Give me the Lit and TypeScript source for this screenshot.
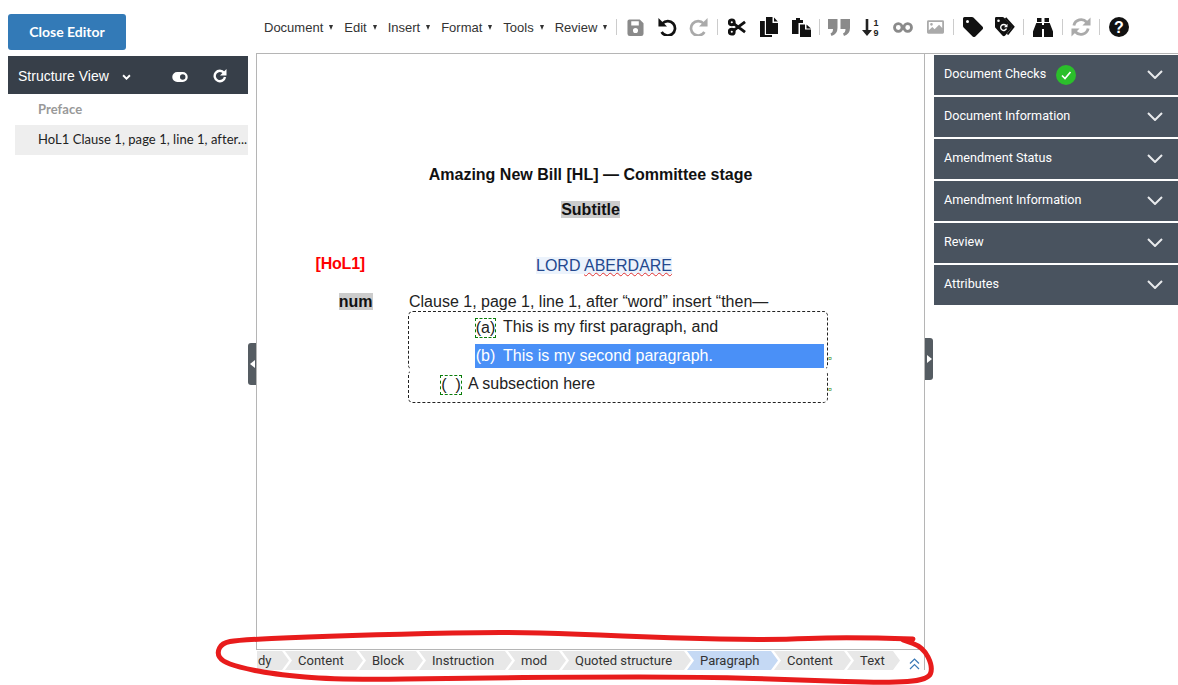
import { LitElement, html, css, svg } from "lit";
import { customElement } from "lit/decorators.js";

const ic = (w: number, h: number, vb: string, color: string, body: unknown) =>
  html`<svg class="ic" width=${w} height=${h} viewBox=${vb} style="color:${color}">${body}</svg>`;

const GREY = "#8a8a8a";
const LIGHT = "#aaa";
const BLK = "#111";

type Tool = { ml: number; icon?: unknown };

const TOOLS: Tool[] = [
  { ml: 9 },
  { ml: 10, icon: ic(17, 17, "0 0 18 18", GREY, svg`<path fill="currentColor" fill-rule="evenodd" d="M2.5 0.5h11l4 4v11a2.500 2.500 0 0 1-2.500 2.500H3a2.500 2.500 0 0 1-2.500-2.500V2.500a2 2 0 0 1 2-2zm2 2v4.500h8V2.500zm4.500 7a2.700 2.700 0 1 0 0 5.400 2.700 2.700 0 0 0 0-5.400z"/>`) },
  { ml: 13, icon: ic(20, 18, "0 0 22 20", BLK, svg`<path fill="none" stroke="currentColor" stroke-width="3" d="M6 6a8 8 0 1 1-1 9.500"/><path fill="currentColor" d="M1.500 0v9.500H11z"/>`) },
  { ml: 12, icon: ic(20, 18, "0 0 22 20", LIGHT, svg`<path fill="none" stroke="currentColor" stroke-width="3" d="M16 6a8 8 0 1 0 1 9.500"/><path fill="currentColor" d="M20.500 0v9.500H11z"/>`) },
  { ml: 8 },
  { ml: 10, icon: ic(18, 18, "0 0 19 18", BLK, svg`<g fill="none" stroke="currentColor" stroke-width="3"><circle cx="4" cy="4" r="2.600"/><circle cx="4" cy="14" r="2.600"/><path d="M6 5.500 L18 14.500 M6 12.500 L18 3.500"/></g>`) },
  { ml: 14, icon: ic(18, 20, "0 0 18 20", BLK, svg`<path fill="currentColor" d="M6 0h6.500v6H18v11H6z"/><path fill="currentColor" d="M14 0.500l3.800 4H14z"/><path fill="currentColor" d="M0 4h4.800v14H12v2H0z"/>`) },
  { ml: 14, icon: ic(19, 20, "0 0 19 20", BLK, svg`<path fill="currentColor" d="M0 3h4V1h4v2h3v3H6.500v11H0z"/><path fill="currentColor" d="M8 7.500h5v5h6V20H8z"/><path fill="currentColor" d="M14.500 7.500l4.500 4h-4.500z"/>`) },
  { ml: 8 },
  { ml: 8, icon: ic(22, 17, "0 0 22 17", GREY, svg`<path fill="currentColor" d="M0 0h9.500v9q0 6-6 8L2.500 14.500q2.500-1 2.500-4.500H0zM12.500 0H22v9q0 6-6 8l-1-2.500q2.500-1 2.500-4.500h-5z"/>`) },
  { ml: 12, icon: ic(18, 18, "0 0 18 18", "#222", svg`<path fill="currentColor" d="M3.700 1h2.600v11H10l-5 6-5-6h3.700z"/><text x="11.500" y="7.500" font-size="9" font-weight="700" fill="currentColor" font-family="Liberation Sans">1</text><text x="11.500" y="17.500" font-size="9" font-weight="700" fill="currentColor" font-family="Liberation Sans">9</text>`) },
  { ml: 13, icon: ic(20, 11, "0 0 20 11", GREY, svg`<g fill="none" stroke="currentColor" stroke-width="2.800"><circle cx="5.300" cy="5.500" r="3.800"/><circle cx="14.700" cy="5.500" r="3.800"/></g>`) },
  { ml: 14, icon: ic(17, 14, "0 0 19 15", LIGHT, svg`<path fill="currentColor" fill-rule="evenodd" d="M1.500 0h16A1.500 1.500 0 0 1 19 1.500v12a1.500 1.500 0 0 1-1.500 1.500h-16A1.500 1.500 0 0 1 0 13.500v-12A1.500 1.500 0 0 1 1.500 0zM2 2v9l4-3.500 2.500 2.500 5-5 3.500 3.500V2zM5 3a1.500 1.500 0 1 0 0 3 1.500 1.500 0 0 0 0-3z"/>`) },
  { ml: 9 },
  { ml: 9, icon: ic(20, 20, "0 0 20 20", BLK, svg`<path fill="currentColor" fill-rule="evenodd" d="M1.500 0H9a2 2 0 0 1 1.400.6l9 9a2 2 0 0 1 0 2.800l-7 7a2 2 0 0 1-2.800 0l-9-9A2 2 0 0 1 0 9V1.500A1.500 1.500 0 0 1 1.500 0zM4.500 3a1.500 1.500 0 1 0 0 3 1.500 1.500 0 0 0 0-3z"/>`) },
  { ml: 12, icon: ic(20, 20, "0 0 20 20", BLK, svg`<path fill="currentColor" fill-rule="evenodd" d="M1.300 0H7.500a2 2 0 0 1 1.400.6l7.600 7.800a2 2 0 0 1 0 2.700l-6.300 7.400a2 2 0 0 1-2.800 0L0.600 11A2 2 0 0 1 0 9.500V1.300A1.300 1.300 0 0 1 1.300 0zM3.500 2.500a1.300 1.300 0 1 0 0 2.600 1.300 1.300 0 0 0 0-2.600z"/><path fill="none" stroke="#fff" stroke-width="1.400" d="M11 8.500a3 3 0 1 0 .5 3"/><path fill="#fff" d="M12.500 6.800v3.400H9z"/><path fill="none" stroke="currentColor" stroke-width="2" d="M10.500 1l8 8.800-6 7.700"/>`) },
  { ml: 8 },
  { ml: 9, icon: ic(20, 19, "0 0 20 19", BLK, svg`<path fill="currentColor" d="M4 0h4.500v4H4zM11.500 0H16v4h-4.500zM3.300 5H9v14H0v-5.500zM11 5h5.700L20 13.500V19h-9z"/><path fill="currentColor" d="M9 7h2v4H9z"/>`) },
  { ml: 9 },
  { ml: 8, icon: ic(20, 20, "0 0 21 21", LIGHT, svg`<path fill="none" stroke="currentColor" stroke-width="3" d="M3 9a7.800 7.800 0 0 1 13.500-3.500L18 7M18 12a7.800 7.800 0 0 1-13.500 3.500L3 14"/><path fill="currentColor" d="M20.500 0.500v8.500H12zM0.500 20.500V12H9z"/>`) },
  { ml: 8 },
  { ml: 9, icon: ic(20, 20, "0 0 20 20", BLK, svg`<circle cx="10" cy="10" r="10" fill="currentColor"/><text x="10" y="15.800" text-anchor="middle" font-size="16" font-weight="700" fill="#fff" font-family="Liberation Sans">?</text>`) },
];

const INK: [number, number][] = [
  [913, 639], [847, 637], [770, 640], [670, 638], [575, 634], [505, 632], [400, 634], [305, 637], [238, 640],
  [222, 643], [217, 653], [222, 661], [238, 667], [272, 674], [338, 680], [472, 678], [575, 677], [703, 677],
  [803, 680], [887, 683], [928, 680], [933, 667], [923, 647], [903, 640],
];

const inkPath = () => {
  let d = `M${INK[0][0]} ${INK[0][1]}`;
  for (let i = 1; i < INK.length - 1; i++) {
    const [x, y] = INK[i];
    const [nx, ny] = INK[i + 1];
    d += ` Q${x} ${y} ${(x + nx) / 2} ${(y + ny) / 2}`;
  }
  const last = INK[INK.length - 1];
  return `${d} L${last[0]} ${last[1]}`;
};

@customElement("app-root")
export class AppRoot extends LitElement {
  static styles = css`
    :host { display: block; position: relative; width: 1178px; height: 685px; overflow: hidden; background: #fff; font-family: "Liberation Sans", Arial, sans-serif; color: #222; }
    .page { display: grid; grid-template-columns: 248px 686px 244px; grid-template-rows: 54px 631px; height: 685px; }
    .left-top { padding: 14px 0 0 8px; box-sizing: border-box; }
    .close { width: 118px; height: 36px; padding-bottom: 2px; box-sizing: border-box; background: #337ab7; border-radius: 3px; color: #fff; font: 700 14px Lato, sans-serif; display: flex; align-items: center; justify-content: center; }
    .toolbar { grid-column: 2 / 4; display: flex; align-items: center; height: 54px; padding: 1px 0 0 8px; box-sizing: border-box; margin-left: 8px; border-bottom: 1px solid #b5b5b5; }
    .menu { display: flex; font: 13px "Liberation Sans", Arial, sans-serif; color: #333; gap: 11px; }
    .menu span { display: flex; align-items: center; }
    .menu span::after { content: ""; margin-left: 6px; margin-top: 1px; border-left: 2.5px solid transparent; border-right: 2.5px solid transparent; border-top: 5px solid #333; }
    .tools { display: flex; align-items: center; height: 24px; }
    .sep { width: 1px; height: 16px; background: #ccc; }
    .ic { display: block; flex: none; }
    .left { display: flex; flex-direction: column; padding-left: 8px; }
    .sv { height: 38px; background: #373f49; color: #fff; display: flex; align-items: center; padding-left: 10px; font: 14px "Liberation Sans", Arial, sans-serif; margin-top: 2px; }
    .sv .t { width: 104px; padding-top: 2px; }
    .sv .a { width: 50px; padding-top: 3px; }
    .sv .b { width: 41px; padding-top: 4px; }
    .sv .r { padding-top: 1px; }
    .tree { font: 13px Lato, sans-serif; letter-spacing: 0.05px; }
    .pre { height: 30px; padding-left: 30px; color: #999; font-weight: 700; display: flex; align-items: center; }
    .sel { height: 30px; margin: 1px 0 0 7px; padding: 0 0 2px 23px; box-sizing: border-box; background: #eee; color: #222; display: flex; align-items: center; white-space: nowrap; overflow: hidden; }
    .doc { border-left: 1px solid #b5b5b5; border-right: 1px solid #b5b5b5; box-sizing: border-box; margin: 0 0 15px 8px; width: 669px; display: flex; flex-direction: column; font: 16px "Liberation Sans", Arial, sans-serif; }
    .content { flex: 1; display: flex; flex-direction: column; padding-top: 111px; }
    .title { text-align: center; font-weight: 700; height: 20px; line-height: 20px; color: #111; }
    .sub { text-align: center; font-weight: 700; margin-top: 15px; height: 20px; line-height: 20px; }
    .sub span, .num { background: #ccc; color: #111; }
    .lordrow { display: flex; margin-top: 34px; height: 22px; line-height: 22px; }
    .hol { color: #f00; font-weight: 700; width: 108px; text-align: right; position: relative; top: -1px; flex: none; letter-spacing: -0.2px; }
    .lord { margin: 3px 0 0 171px; background: #ecf3fc; color: #23488f; height: 17px; line-height: 17px; }
    .wavy { text-decoration: underline wavy #e03030 1px; text-decoration-skip-ink: none; }
    .numrow { display: flex; margin-top: 16px; height: 19px; line-height: 20px; }
    .numc { width: 115.5px; text-align: right; font-weight: 700; flex: none; }
    .numrow .txt { margin-left: 36.5px; color: #222; }
    .quoted { margin-left: 151px; width: 420px; }
    .part { position: relative; box-sizing: border-box; border: 1px dashed #222; border-radius: 5px; }
    .part1 { height: 59px; padding: 3px 3px 0 66px; border-bottom-color: transparent; }
    .part2 { height: 33px; padding: 1px 0 0 31px; border-top-color: transparent; }
    .row { display: flex; align-items: center; white-space: pre; height: 24px; }
    .row.hi { margin-top: 5px; background: #4a90f7; color: #fff; }
    .mark { box-sizing: border-box; border: 1px dashed #0a7d0a; height: 20px; display: flex; align-items: center; justify-content: center; margin-top: 2px; }
    .m1 { width: 21px; margin-right: 7px; }
    .m3 { width: 22px; margin: 1px 6px 0 0; }
    .plain { width: 21px; margin-right: 7px; text-align: center; }
    .tiny { position: absolute; right: -5px; font-size: 7px; color: #2a8a2a; line-height: 7px; }
    .t1 { top: 43px; }
    .t2 { top: 15px; }
    .crumbs { height: 21px; flex: none; margin-left: -1px; border-top: 1px solid #b5b5b5; background: #fff; position: relative; box-sizing: border-box; padding: 1px 0 0 1px; font: 13px Roboto, sans-serif; color: #333; }
    .crumb-list { display: flex; overflow: hidden; }
    .c { height: 19px; line-height: 20px; background: #e8e8e8; flex: none; box-sizing: border-box; padding-left: 13px; white-space: nowrap; clip-path: polygon(0 0, calc(100% - 7px) 0, 100% 50%, calc(100% - 7px) 100%, 0 100%, 7px 50%); margin-right: -4px; }
    .c.first { padding-left: 1px; clip-path: polygon(0 0, calc(100% - 7px) 0, 100% 50%, calc(100% - 7px) 100%, 0 100%); }
    .c.on { background: #c5d9f4; }
    .up { position: absolute; right: 4px; top: 8px; }
    .handle { position: absolute; width: 8px; height: 42px; background: #555c62; display: flex; align-items: center; justify-content: center; z-index: 2; }
    .hl { left: 248px; top: 343px; border-radius: 3px 0 0 3px; }
    .hr { left: 925px; top: 338px; border-radius: 0 3px 3px 0; }
    .right { padding-top: 1px; display: flex; flex-direction: column; gap: 2px; }
    .acc { height: 40px; background: #49535f; color: #fff; font: 12.6px Roboto, sans-serif; display: flex; align-items: center; padding: 0 15px 1px 10px; box-sizing: border-box; }
    .acc .l { flex: 1; display: flex; align-items: center; gap: 10px; padding-bottom: 3px; }
    .acc .l .ic { margin-top: 3px; }
    .ink { position: absolute; left: 0; top: 0; pointer-events: none; z-index: 3; }
  `;

  render() {
    const menus = ["Document", "Edit", "Insert", "Format", "Tools", "Review"];
    const panels = ["Document Information", "Amendment Status", "Amendment Information", "Review", "Attributes"];
    const crumbs: [string, number, boolean][] = [
      ["dy", 32, false], ["Content", 78, false], ["Block", 64, false], ["Instruction", 93, false], ["mod", 58, false],
      ["Quoted structure", 129, false], ["Paragraph", 91, true], ["Content", 77, false], ["Text", 53, false],
    ];
    const chevron = ic(16, 9, "0 0 16 9", "#fff", svg`<path d="M1 1 L8 8 L15 1" fill="none" stroke="#e8eaec" stroke-width="2"/>`);
    return html`
      <div class="page">
        <div class="left-top"><div class="close">Close Editor</div></div>
        <div class="toolbar">
          <div class="menu">${menus.map((m) => html`<span>${m}</span>`)}</div>
          <div class="tools">
            ${TOOLS.map((t) => t.icon
              ? html`<div style="margin-left:${t.ml}px">${t.icon}</div>`
              : html`<div class="sep" style="margin-left:${t.ml}px"></div>`)}
          </div>
        </div>
        <div class="left">
          <div class="sv">
            <span class="t">Structure View</span>
            <span class="a">${ic(9, 6, "0 0 10 7", "#fff", svg`<path d="M1 1.500 L5 5.500 L9 1.500" fill="none" stroke="currentColor" stroke-width="2.200"/>`)}</span>
            <span class="b">${ic(16, 10, "0 0 17 11", "#fff", svg`<path fill="currentColor" fill-rule="evenodd" d="M5.500 0h6a5.500 5.500 0 0 1 0 11h-6a5.500 5.500 0 0 1 0-11zM11.500 2.500a3 3 0 1 0 0 6 3 3 0 0 0 0-6z"/>`)}</span>
            <span class="r">${ic(14, 14, "0 0 14 14", "#fff", svg`<path fill="none" stroke="currentColor" stroke-width="2.400" d="M11 3.800a5.200 5.200 0 1 0 1 4.200"/><path fill="currentColor" d="M13.500 0v6.500H7z"/>`)}</span>
          </div>
          <div class="tree">
            <div class="pre">Preface</div>
            <div class="sel">HoL1 Clause 1, page 1, line 1, after...</div>
          </div>
        </div>
        <div class="doc">
          <div class="content">
            <div class="title">Amazing New Bill [HL] — Committee stage</div>
            <div class="sub"><span>Subtitle</span></div>
            <div class="lordrow"><div class="hol">[HoL1]</div><div class="lord">LORD <span class="wavy">ABERDARE</span></div></div>
            <div class="numrow"><div class="numc"><span class="num">num</span></div><div class="txt">Clause 1, page 1, line 1, after “word” insert “then—</div></div>
            <div class="quoted">
              <div class="part part1">
                <div class="row"><span class="mark m1">(a)</span>This is my first paragraph, and</div>
                <div class="row hi"><span class="plain">(b)</span>This is my second paragraph.</div>
                <span class="tiny t1">¤</span>
              </div>
              <div class="part part2">
                <div class="row"><span class="mark m3">(  )</span>A subsection here</div>
                <span class="tiny t2">¤</span>
              </div>
            </div>
          </div>
          <div class="crumbs">
            <div class="crumb-list">
              ${crumbs.map(([t, w, on], i) => html`<div class="c ${on ? "on" : ""} ${i === 0 ? "first" : ""}" style="width:${w}px">${t}</div>`)}
            </div>
            <div class="up">${ic(11, 12, "0 0 11 12", "#3a78b5", svg`<path d="M1 5.500 L5.500 1 L10 5.500 M1 11 L5.500 6.500 L10 11" fill="none" stroke="currentColor" stroke-width="1.200"/>`)}</div>
          </div>
        </div>
        <div class="right">
          <div class="acc"><div class="l">Document Checks ${ic(20, 20, "0 0 20 20", "#2bbf2b", svg`<circle cx="10" cy="10" r="10" fill="currentColor"/><path d="M6 10.500 L9 13.500 L14.500 7" fill="none" stroke="#fff" stroke-width="1.700"/>`)}</div>${chevron}</div>
          ${panels.map((p) => html`<div class="acc"><div class="l">${p}</div>${chevron}</div>`)}
        </div>
      </div>
      <div class="handle hl">${ic(5, 8, "0 0 5 8", "#fff", svg`<path fill="currentColor" d="M5 0v8L0 4z"/>`)}</div>
      <div class="handle hr">${ic(5, 8, "0 0 5 8", "#fff", svg`<path fill="currentColor" d="M0 0v8l5-4z"/>`)}</div>
      <svg class="ink" width="1178" height="685" viewBox="0 0 1178 685"><path d=${inkPath()} fill="none" stroke="#e81c1c" stroke-width="5" stroke-linejoin="round" stroke-linecap="round"/></svg>
    `;
  }
}
